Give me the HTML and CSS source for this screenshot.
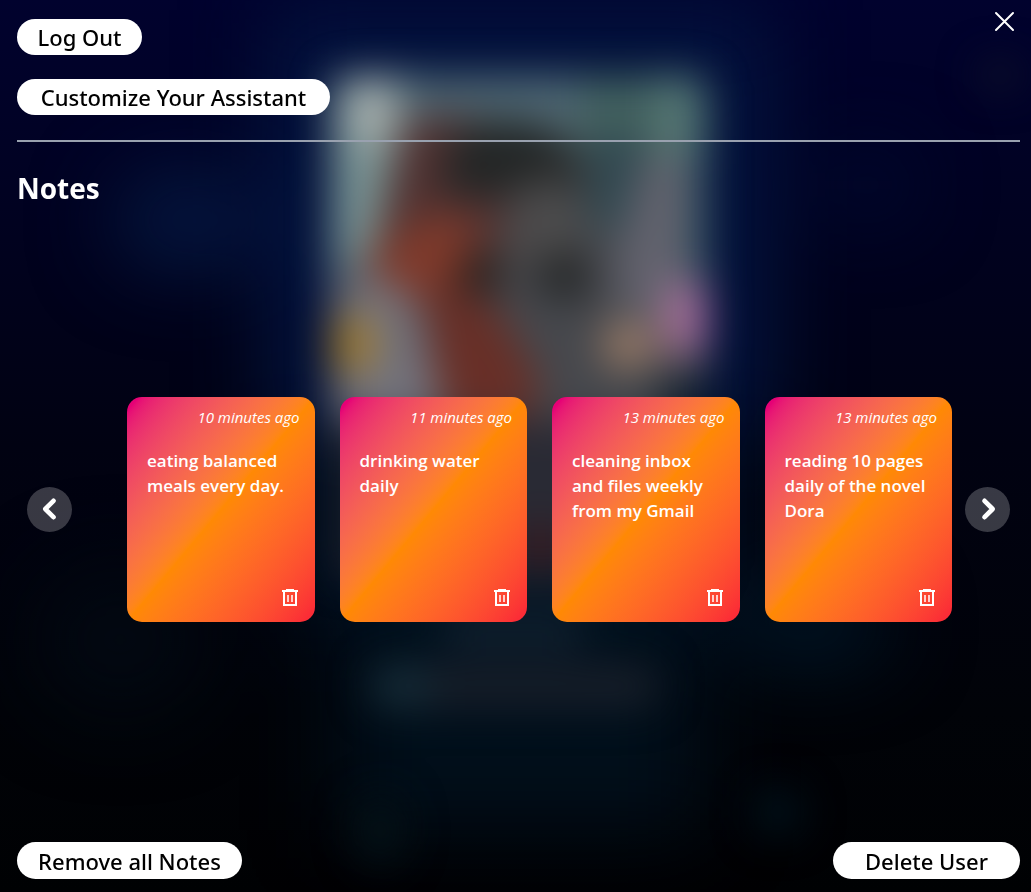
FILE: index.html
```html
<!DOCTYPE html>
<html lang="en">
<head>
<meta charset="utf-8">
<meta name="viewport" content="width=device-width, initial-scale=1">
<title>Notes</title>
<link rel="stylesheet" href="styles.css">
</head>
<body>
<svg class="backdrop" viewBox="0 0 1031 892" preserveAspectRatio="none" aria-hidden="true">
  <defs>
    <linearGradient id="night" x1="0" y1="0" x2="0" y2="1">
      <stop offset="0" stop-color="#01022e"/>
      <stop offset=".25" stop-color="#010220"/>
      <stop offset=".5" stop-color="#010212"/>
      <stop offset=".8" stop-color="#010308"/>
      <stop offset="1" stop-color="#000103"/>
    </linearGradient>
    <filter id="wide" x="-50%" y="-50%" width="200%" height="200%" color-interpolation-filters="sRGB"><feGaussianBlur stdDeviation="42"/></filter>
    <filter id="soft" x="-20%" y="-20%" width="140%" height="140%" color-interpolation-filters="sRGB"><feGaussianBlur stdDeviation="20"/></filter>
    <clipPath id="frame"><rect x="332" y="76" width="374" height="498" rx="16"/></clipPath>
  </defs>
  <rect width="1031" height="892" fill="url(#night)"/>
  <g filter="url(#wide)">
    <rect x="270" y="10" width="500" height="420" fill="#03143f"/>
    <rect x="300" y="430" width="430" height="190" fill="#021325"/>
    <rect x="340" y="600" width="360" height="230" fill="#010f1b"/>
    <ellipse cx="185" cy="220" rx="70" ry="46" fill="#051a44"/>
    <ellipse cx="870" cy="185" rx="40" ry="30" fill="#020c32"/>
    <ellipse cx="810" cy="625" rx="80" ry="34" fill="#001a2c"/>
    <ellipse cx="120" cy="640" rx="80" ry="70" fill="#020912"/>
  </g>
  <g filter="url(#soft)">
    <ellipse cx="778" cy="812" rx="24" ry="24" fill="#00131d"/>
    <ellipse cx="1000" cy="75" rx="22" ry="14" fill="#10132a"/>
    <ellipse cx="380" cy="830" rx="24" ry="36" fill="#041218"/>
    <g clip-path="url(#frame)">
      <rect x="330" y="70" width="380" height="510" fill="#46484d"/>
      <rect x="330" y="70" width="380" height="65" fill="#516a75"/>
      <rect x="580" y="70" width="130" height="90" fill="#42615f"/>
      <path d="M330 70h75l-12 85-20 95-43 35z" fill="#7b9696"/>
      <rect x="348" y="82" width="47" height="60" fill="#a8b0ae"/>
      <path d="M408 115h72l30 110-50 90-70-5-20-50z" fill="#523231"/>
      <path d="M450 135q50-28 105-5l30 45-15 35-50-10-80-5z" fill="#232626"/>
      <path d="M590 135h55v110l-55-20z" fill="#304850"/>
      <ellipse cx="545" cy="230" rx="42" ry="52" fill="#4c4b4c"/>
      <path d="M645 155h65v160h-90l-5-60z" fill="#62626d"/>
      <rect x="655" y="76" width="51" height="80" fill="#567874"/>
      <rect x="688" y="150" width="18" height="130" fill="#3e5f69"/>
      <path d="M372 250l63-37 45 12-15 55-45 25-50-18z" fill="#803a2b"/>
      <path d="M330 285l50-10 35 25 30 120h-115z" fill="#72727c"/>
      <path d="M425 280l70 25 45 75-15 65h-75l-20-95z" fill="#682f27"/>
      <ellipse cx="481" cy="274" rx="24" ry="22" fill="#271e1b"/>
      <ellipse cx="564" cy="276" rx="29" ry="24" fill="#242627"/>
      <ellipse cx="350" cy="344" rx="26" ry="30" fill="#a57e2d"/>
      <ellipse cx="629" cy="345" rx="27" ry="22" fill="#a5826a"/>
      <ellipse cx="687" cy="318" rx="23" ry="39" fill="#b074a1"/>
      <rect x="660" y="380" width="50" height="55" fill="#111f2d"/>
      <rect x="330" y="420" width="380" height="160" fill="#292a34"/>
      <rect x="510" y="525" width="60" height="45" fill="#341b22"/>
      <rect x="330" y="455" width="28" height="110" fill="#111723"/>
      <rect x="685" y="420" width="30" height="160" fill="#030d1f"/>
    </g>
    <rect x="410" y="580" width="215" height="12" fill="#142631"/>
    <rect x="445" y="620" width="138" height="24" fill="#172736"/>
    <rect x="370" y="665" width="290" height="42" rx="20" fill="#181f2a"/>
    <rect x="370" y="665" width="60" height="42" rx="20" fill="#172e3a"/>
  </g>
</svg>

<main class="panel">
  <button class="close" type="button" aria-label="Close">
    <svg viewBox="0 0 24 24" aria-hidden="true"><path d="M3 4l17 17M20 4L3 21"/></svg>
  </button>
  <header class="actions">
    <button class="pill pill-logout" type="button">Log Out</button>
    <button class="pill pill-customize" type="button">Customize Your Assistant</button>
  </header>
  <hr class="divider">
  <h1 class="title">Notes</h1>

  <section class="carousel" aria-label="Notes">
    <button class="arrow" type="button" aria-label="Previous notes">
      <svg viewBox="0 0 24 24" aria-hidden="true"><path d="M15 5l-7 7 7 7"/></svg>
    </button>
    <div class="cards">
      <article class="card">
        <time class="age">10 minutes ago</time>
        <p class="text">eating balanced meals every day.</p>
        <button class="trash" type="button" aria-label="Delete note"><svg viewBox="0 0 18 18" aria-hidden="true"><path class="lid" d="M5 0h8v1h4v2H1V1h4z"/><path class="bin" d="M3 3v13h12V3"/><path class="bars" d="M7 6v7M11 6v7"/></svg></button>
      </article>
      <article class="card">
        <time class="age">11 minutes ago</time>
        <p class="text">drinking water daily</p>
        <button class="trash" type="button" aria-label="Delete note"><svg viewBox="0 0 18 18" aria-hidden="true"><path class="lid" d="M5 0h8v1h4v2H1V1h4z"/><path class="bin" d="M3 3v13h12V3"/><path class="bars" d="M7 6v7M11 6v7"/></svg></button>
      </article>
      <article class="card">
        <time class="age">13 minutes ago</time>
        <p class="text">cleaning inbox and files weekly from my Gmail</p>
        <button class="trash" type="button" aria-label="Delete note"><svg viewBox="0 0 18 18" aria-hidden="true"><path class="lid" d="M5 0h8v1h4v2H1V1h4z"/><path class="bin" d="M3 3v13h12V3"/><path class="bars" d="M7 6v7M11 6v7"/></svg></button>
      </article>
      <article class="card">
        <time class="age">13 minutes ago</time>
        <p class="text">reading 10 pages daily of the novel Dora</p>
        <button class="trash" type="button" aria-label="Delete note"><svg viewBox="0 0 18 18" aria-hidden="true"><path class="lid" d="M5 0h8v1h4v2H1V1h4z"/><path class="bin" d="M3 3v13h12V3"/><path class="bars" d="M7 6v7M11 6v7"/></svg></button>
      </article>
    </div>
    <button class="arrow" type="button" aria-label="Next notes">
      <svg viewBox="0 0 24 24" aria-hidden="true"><path d="M9 5l7 7-7 7"/></svg>
    </button>
  </section>

  <footer class="footer">
    <button class="pill pill-remove" type="button">Remove all Notes</button>
    <button class="pill pill-delete" type="button">Delete User</button>
  </footer>
</main>
</body>
</html>
```
FILE: styles.css
```css
* {
  box-sizing: border-box;
}

body {
  margin: 0;
  background: #000108;
  color: #fff;
  font-family: "Segoe UI", "Open Sans", "Noto Sans", sans-serif;
}

button {
  margin: 0;
  padding: 0;
  border: 0;
  background: none;
  color: inherit;
  font: inherit;
  cursor: pointer;
}

.backdrop {
  position: fixed;
  inset: 0;
  z-index: -1;
  width: 100%;
  height: 100%;
}

.panel {
  position: relative;
  display: flex;
  flex-direction: column;
  min-height: 100vh;
  padding: 19px 11px 13px 17px;
}

.close {
  position: absolute;
  top: 9px;
  right: 14px;
  width: 24px;
  height: 24px;
}

.close svg,
.arrow svg,
.trash svg {
  display: block;
  fill: none;
  stroke: #fff;
}

.close svg {
  stroke-width: 2;
  stroke-linecap: round;
}

.actions {
  display: flex;
  flex-direction: column;
  align-items: flex-start;
  gap: 24px;
}

.pill {
  height: 36px;
  border-radius: 18px;
  background: #fff;
  color: #000;
  font-family: "Segoe UI", "Noto Sans", "Open Sans", sans-serif;
  font-size: 22px;
  font-weight: 500;
  line-height: 36px;
  white-space: nowrap;
}

.pill-logout {
  width: 125px;
}

.pill-customize {
  width: 313px;
}

.divider {
  width: 100%;
  height: 2px;
  margin: 25px 0 0;
  border: 0;
  background: #99a1af;
}

.title {
  margin: 27px 0 0;
  font-size: 28px;
  font-weight: 700;
  line-height: 38px;
}

.carousel {
  display: flex;
  flex: 1;
  align-items: center;
  padding: 0 10px 31px;
}

.arrow {
  display: grid;
  flex: none;
  place-items: center;
  width: 45px;
  height: 45px;
  border-radius: 50%;
  background: rgb(255 255 255 / 22%);
}

.arrow svg {
  width: 28px;
  height: 28px;
  stroke-width: 4;
  stroke-linecap: round;
  stroke-linejoin: round;
}

.cards {
  display: grid;
  flex: 1;
  grid-template-columns: repeat(4, 1fr);
  gap: 25px;
  margin: 0 13px 0 55px;
}

.card {
  display: flex;
  flex-direction: column;
  min-width: 0;
  min-height: 225px;
  padding: 10px 15px 15px 20px;
  border-radius: 15px;
  background: linear-gradient(to bottom right in oklab, #e60076 3%, #ff8904 50%, #fb2c36 97%);
}

.age {
  align-self: flex-end;
  font-size: 15px;
  font-style: italic;
  line-height: 21px;
  white-space: nowrap;
}

.text {
  margin: 20px 0 0;
  font-size: 17px;
  font-weight: 600;
  line-height: 25px;
}

.trash {
  align-self: flex-end;
  width: 20px;
  height: 20px;
  margin-top: auto;
}

.trash svg {
  width: 18px;
  height: 18px;
  margin: 2px 1px 0;
}

.trash .lid {
  fill: #fff;
  stroke: none;
}

.trash .bin {
  stroke-width: 2;
}

.trash .bars {
  stroke-width: 1.5;
}

.footer {
  display: flex;
  justify-content: space-between;
}

.footer .pill {
  height: 37px;
  border-radius: 19px;
}

.pill-remove {
  width: 225px;
}

.pill-delete {
  width: 187px;
}
```
